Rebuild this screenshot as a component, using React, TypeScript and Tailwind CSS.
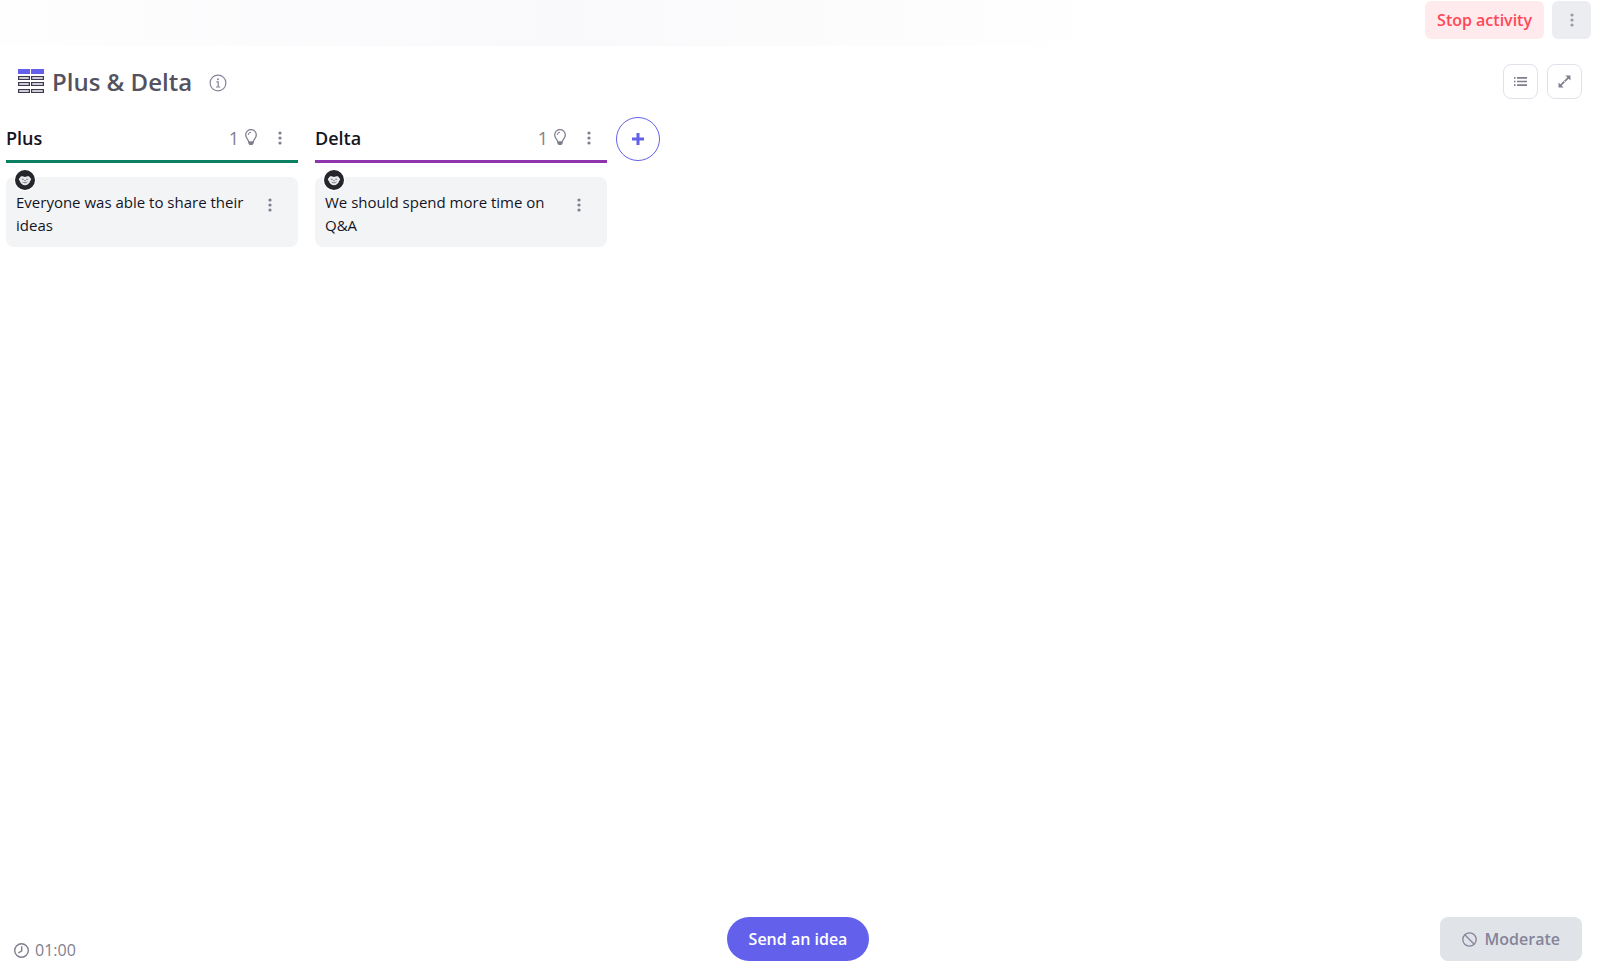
import type { ReactNode } from 'react';

type Idea = { id: number; text: string };
type BoardColumn = { id: string; name: string; bar: string; ideas: Idea[] };

const COLUMNS: BoardColumn[] = [
  {
    id: 'plus',
    name: 'Plus',
    bar: 'border-[#0b7f62]',
    ideas: [{ id: 1, text: 'Everyone was able to share their ideas' }],
  },
  {
    id: 'delta',
    name: 'Delta',
    bar: 'border-[#8e35ae]',
    ideas: [{ id: 2, text: 'We should spend more time on Q&A' }],
  },
];

export default function App() {
  return (
    <div className="flex min-h-screen flex-col bg-white font-['Open_Sans','Noto_Sans',sans-serif] text-base text-[#14141f]">
      <div className="flex h-[46px] items-start justify-end gap-2 bg-linear-to-r from-[#fefeff] via-[#f9f9fb] via-35% to-white to-70% pt-px pr-[9px]">
        <button className="h-[38px] rounded-md bg-[#ffebed] px-3 font-semibold text-[#ff4757]">
          Stop activity
        </button>
        <button
          aria-label="Activity options"
          className="flex h-[38px] w-[39px] items-center justify-center rounded-md bg-[#ecedf1] text-[#9b9ba6]"
        >
          <Dots />
        </button>
      </div>

      <header className="flex items-center pt-[18px] pr-[18px] pl-[18px]">
        <BoardIcon />
        <h1 className="ml-2 text-2xl font-semibold text-[#535260]">Plus &amp; Delta</h1>
        <button aria-label="About this activity" className="ml-[17px] pt-[3px] text-[#85849a]">
          <InfoIcon />
        </button>
        <div className="ml-auto flex gap-[9px]">
          <SquareButton label="List view">
            <ListIcon />
          </SquareButton>
          <SquareButton label="Full screen">
            <ExpandIcon />
          </SquareButton>
        </div>
      </header>

      <main className="flex flex-1 items-start px-1.5 pt-[18px]">
        <div className="flex items-start gap-[17px]">
          {COLUMNS.map((column) => (
            <Column key={column.id} column={column} />
          ))}
        </div>
        <button
          aria-label="Add a column"
          className="ml-[9px] flex size-11 items-center justify-center rounded-full border border-[#6361ec] text-[#6361ec]"
        >
          <svg width="12" height="12" viewBox="0 0 12 12" fill="none" stroke="currentColor" strokeWidth="3">
            <path d="M6 0v12M0 6h12" />
          </svg>
        </button>
      </main>

      <footer className="grid grid-cols-3 items-end pr-[18px] pb-[9px] pl-[14px]">
        <div className="flex items-center gap-1.5 leading-[22px] text-[#7f7e8e]">
          <ClockIcon />
          <span>01:00</span>
        </div>
        <button className="h-11 justify-self-center rounded-full bg-[#6361ec] px-[22px] font-semibold text-white">
          Send an idea
        </button>
        <button className="flex h-11 items-center gap-2 justify-self-end rounded-lg bg-[#e0e4e8] px-[22px] font-semibold text-[#85849a]">
          <BanIcon />
          Moderate
        </button>
      </footer>
    </div>
  );
}

function Column({ column }: { column: BoardColumn }) {
  return (
    <section className="w-[292px]">
      <div className={`flex h-[46px] items-center border-b-3 pr-2.5 pb-0.5 ${column.bar}`}>
        <h2 className="text-lg font-semibold">{column.name}</h2>
        <div className="ml-auto flex items-center gap-1.5 text-[#7f7e8e]">
          <span className="text-lg font-medium">{column.ideas.length}</span>
          <BulbIcon />
        </div>
        <button aria-label={`${column.name} options`} className="ml-[15px] flex h-6 w-4 items-center justify-center text-[#7f7e8e]">
          <Dots />
        </button>
      </div>
      <ul className="mt-[14px] space-y-4">
        {column.ideas.map((idea) => (
          <li key={idea.id} className="relative flex items-start rounded-lg bg-[#f3f4f6] px-2.5 pt-[14px] pb-2.5">
            <Avatar />
            <p className="w-[236px] text-[15px] leading-[23px]">{idea.text}</p>
            <button aria-label="Idea options" className="ml-2.5 flex h-7 w-4 items-center justify-center text-[#7f7e8e]">
              <Dots />
            </button>
          </li>
        ))}
      </ul>
    </section>
  );
}

function SquareButton({ label, children }: { label: string; children: ReactNode }) {
  return (
    <button
      aria-label={label}
      className="flex size-[35px] items-center justify-center rounded-lg border border-[#dfe2e9] bg-white text-[#7f7e8e]"
    >
      {children}
    </button>
  );
}

function Avatar() {
  return (
    <svg className="absolute -top-2 left-2" width="22" height="22" viewBox="0 0 22 22">
      <circle cx="11" cy="11" r="11" fill="#fff" />
      <circle cx="11" cy="11" r="10" fill="#24262c" />
      <path
        d="M5 9.6c1-.3 1-1.8 2.3-2.300 1.300-.4 2.400.6 3.700.6s2.400-1 3.700-.6c1.300.5 1.300 2 2.300 2.300.5 1-.3 1.800-.8 2.400-.8 2.500-2.700 4.200-5.200 4.200s-4.400-1.700-5.200-4.200C5.300 11.400 4.500 10.600 5 9.600z"
        fill="#e9eaec"
      />
      <path d="M7.800 10.300h2M12.200 10.300h2M8.500 12.800c1.300 1.400 3.700 1.400 5 0" fill="none" stroke="#6d6f76" strokeWidth=".9" />
      <path d="M9.800 11.300h2.400L11 12.600z" fill="#6d6f76" />
    </svg>
  );
}

function Dots() {
  return (
    <svg width="4" height="14" viewBox="0 0 4 14" fill="currentColor">
      <circle cx="2" cy="2" r="1.600" />
      <circle cx="2" cy="7" r="1.600" />
      <circle cx="2" cy="12" r="1.600" />
    </svg>
  );
}

function BoardIcon() {
  return (
    <svg width="26" height="25" viewBox="0 0 26 25" fill="none">
      <path d="M0 0h12v5H0zM13 0h13v5H13z" fill="#6361ec" />
      <path
        d="M.6 7.600h10.800v2.800H.6zM13.600 7.600h11.800v2.800H13.600zM.6 13.600h10.800v2.800H.6zM13.600 13.600h11.800v2.800H13.600zM.6 20.600h10.800v2.800H.6zM13.600 20.600h11.800v2.800H13.600z"
        stroke="#3b3a52"
        strokeWidth="1.200"
      />
    </svg>
  );
}

function InfoIcon() {
  return (
    <svg width="18" height="18" viewBox="0 0 18 18" fill="none" stroke="currentColor" strokeWidth="1.200">
      <circle cx="9" cy="9" r="7.900" />
      <path d="M7.300 7.800H9.200V13M7 13h4.200" />
      <circle cx="9" cy="5.200" r="1" fill="currentColor" stroke="none" />
    </svg>
  );
}

function BulbIcon() {
  return (
    <svg width="12" height="17" viewBox="0 0 12 17" fill="none" stroke="currentColor" strokeWidth="1.300">
      <path d="M3.700 13C3.700 10.200.7 9.300.7 5.900a5.300 5.300 0 0 1 10.600 0c0 3.400-3 4.300-3 7.100z" />
      <path d="M3.300 5.900A2.700 2.700 0 0 1 6 3.200" strokeWidth="1" />
      <path d="M3.500 13h5v1.500L7.500 16h-3l-1-1.500z" fill="currentColor" stroke="none" />
    </svg>
  );
}

function ListIcon() {
  return (
    <svg width="13" height="9" viewBox="0 0 13 9" fill="currentColor">
      <path d="M3 0h10v1.700H3zM3 3.650h10v1.700H3zM3 7.300h10V9H3zM0 0h1.500v1.700H0zM0 3.650h1.500v1.700H0zM0 7.300h1.500V9H0z" />
    </svg>
  );
}

function ExpandIcon() {
  return (
    <svg width="13" height="13" viewBox="0 0 14 14">
      <path d="M2.500 11.500l9-9" stroke="currentColor" strokeWidth="1.800" />
      <path d="M8 .6h5.400v5.400zM.6 8v5.400h5.400z" fill="currentColor" />
      <path d="M6.200 6.200l1.600 1.600" stroke="#fff" strokeWidth=".9" />
    </svg>
  );
}

function ClockIcon() {
  return (
    <svg width="15" height="15" viewBox="0 0 15 15" fill="none" stroke="currentColor" strokeWidth="1.400">
      <circle cx="7.500" cy="7.500" r="6.800" />
      <path d="M7.700 3.200v4.600L4.300 10" />
    </svg>
  );
}

function BanIcon() {
  return (
    <svg width="15" height="15" viewBox="0 0 15 15" fill="none" stroke="currentColor" strokeWidth="1.300">
      <circle cx="7.500" cy="7.500" r="6.700" />
      <path d="M2.800 2.800l9.400 9.400" />
    </svg>
  );
}
